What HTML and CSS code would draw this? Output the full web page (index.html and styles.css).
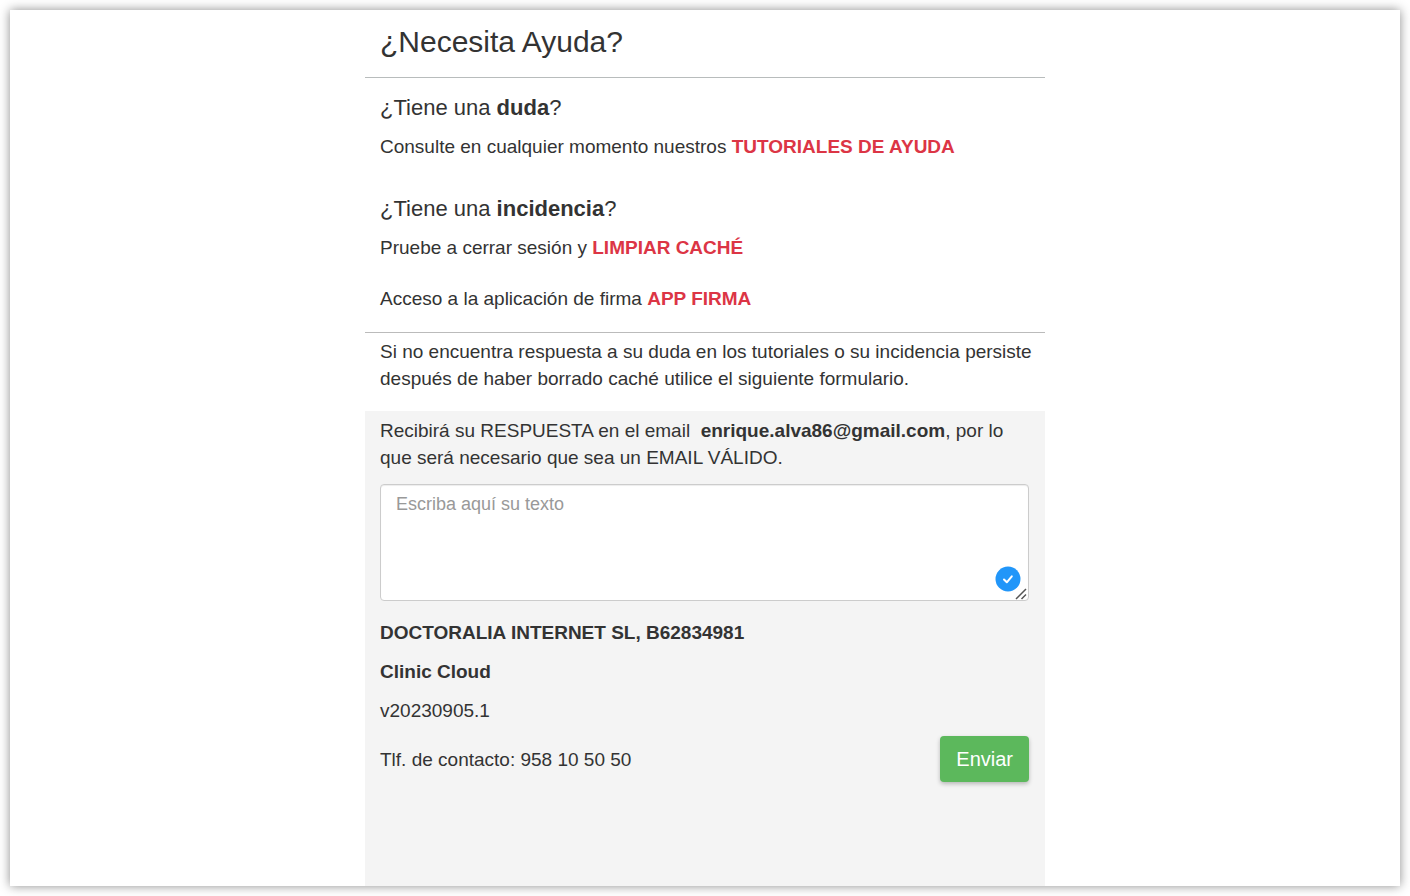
FILE: index.html
```html
<!DOCTYPE html>
<html lang="es">
<head>
<meta charset="utf-8">
<title>¿Necesita Ayuda?</title>
<link rel="stylesheet" href="styles.css">
</head>
<body>
<div class="sheet">
  <main class="column">
    <header class="header"><h1 class="title">¿Necesita Ayuda?</h1></header>
    <section class="topic">
      <h2 class="subtitle">¿Tiene una <strong>duda</strong>?</h2>
      <p class="text">Consulte en cualquier momento nuestros <a class="link" href="#tutoriales">TUTORIALES DE AYUDA</a></p>
    </section>
    <section class="topic topic-issue">
      <h2 class="subtitle">¿Tiene una <strong>incidencia</strong>?</h2>
      <p class="text">Pruebe a cerrar sesión y <a class="link" href="#cache">LIMPIAR CACHÉ</a></p>
      <p class="text text-firma">Acceso a la aplicación de firma <a class="link" href="#firma">APP FIRMA</a></p>
    </section>
    <p class="text intro">Si no encuentra respuesta a su duda en los tutoriales o su incidencia persiste después de haber borrado caché utilice el siguiente formulario.</p>
    <form class="form">
      <label class="text" for="mensaje">Recibirá su RESPUESTA en el email &nbsp;<strong>enrique.alva86@gmail.com</strong>, por lo que será necesario que sea un EMAIL VÁLIDO.</label>
      <div class="field">
        <textarea class="message" id="mensaje" placeholder="Escriba aquí su texto"></textarea>
        <svg class="check" viewBox="0 0 26 26" aria-hidden="true">
          <circle cx="13" cy="13" r="12.5"/>
          <path d="M9 13.500l2.800 2.800 5-6"/>
        </svg>
        <svg class="grip" viewBox="0 0 12 12" aria-hidden="true">
          <path d="M1 11L11 1M6.500 11L11 6.500"/>
        </svg>
      </div>
      <div class="details">
        <p class="text"><strong>DOCTORALIA INTERNET SL, B62834981</strong></p>
        <p class="text"><strong>Clinic Cloud</strong></p>
        <p class="text">v20230905.1</p>
        <div class="actions">
          <p class="text">Tlf. de contacto: 958 10 50 50</p>
          <button class="send" type="submit">Enviar</button>
        </div>
      </div>
    </form>
  </main>
</div>
</body>
</html>
```
FILE: styles.css
```css
* {
  box-sizing: border-box;
}

body {
  margin: 0;
  padding: 10px;
  min-height: 100vh;
  display: flex;
  background: #fff;
  color: #333;
  font-family: Arial, "Liberation Sans", sans-serif;
}

.sheet {
  flex: 1;
  display: flex;
  justify-content: center;
  background: #fff;
  box-shadow: 0 0 10px rgba(0, 0, 0, 0.45);
}

.column {
  flex: 0 1 680px;
  display: flex;
  flex-direction: column;
}

.header {
  padding: 14px 15px 17px;
  border-bottom: 1px solid #b8bcbc;
}

.title,
.subtitle,
.text {
  margin: 0;
  font-weight: normal;
}

.title {
  font-size: 30px;
  line-height: 36px;
}

.subtitle {
  margin-bottom: 11px;
  font-size: 22px;
  line-height: 28px;
}

.text {
  font-size: 19px;
  line-height: 27px;
}

.topic {
  padding: 16px 15px 19px;
}

.topic-issue {
  padding-bottom: 20px;
  border-bottom: 1px solid #bbb;
}

.text-firma {
  margin-top: 24px;
}

.link {
  color: #dc3545;
  font-weight: bold;
  text-decoration: none;
}

.intro {
  padding: 5px 8px 19px 15px;
}

.form {
  flex: 1;
  padding: 6px 16px 15px 15px;
  background: #f4f4f4;
}

.form > .text {
  display: block;
}

.field {
  position: relative;
  margin-top: 13px;
}

.message {
  display: block;
  width: 100%;
  height: 117px;
  padding: 6px 15px;
  border: 1px solid #ccc;
  border-radius: 4px;
  box-shadow: inset 0 1px 1px rgba(0, 0, 0, 0.075);
  background: #fff;
  color: #555;
  font: 18px/26px Arial, "Liberation Sans", sans-serif;
  resize: none;
}

.message::placeholder {
  color: #999;
}

.check {
  position: absolute;
  right: 8px;
  bottom: 9px;
  width: 26px;
  height: 26px;
  fill: #2196f9;
}

.check path {
  fill: none;
  stroke: #fff;
  stroke-width: 2;
  stroke-linecap: round;
  stroke-linejoin: round;
}

.grip {
  position: absolute;
  right: 2px;
  bottom: 1px;
  width: 12px;
  height: 12px;
  fill: none;
  stroke: #555;
  stroke-width: 1.5;
}

.details {
  display: flex;
  flex-direction: column;
  gap: 12px;
  margin-top: 18px;
}

.actions {
  display: flex;
  align-items: center;
  justify-content: space-between;
}

.send {
  padding: 10px 16px;
  border: 0;
  border-radius: 4px;
  box-shadow: 0 2px 4px rgba(0, 0, 0, 0.25);
  background: #5cb85c;
  color: #fff;
  font: 20px/26px Arial, "Liberation Sans", sans-serif;
}
```
